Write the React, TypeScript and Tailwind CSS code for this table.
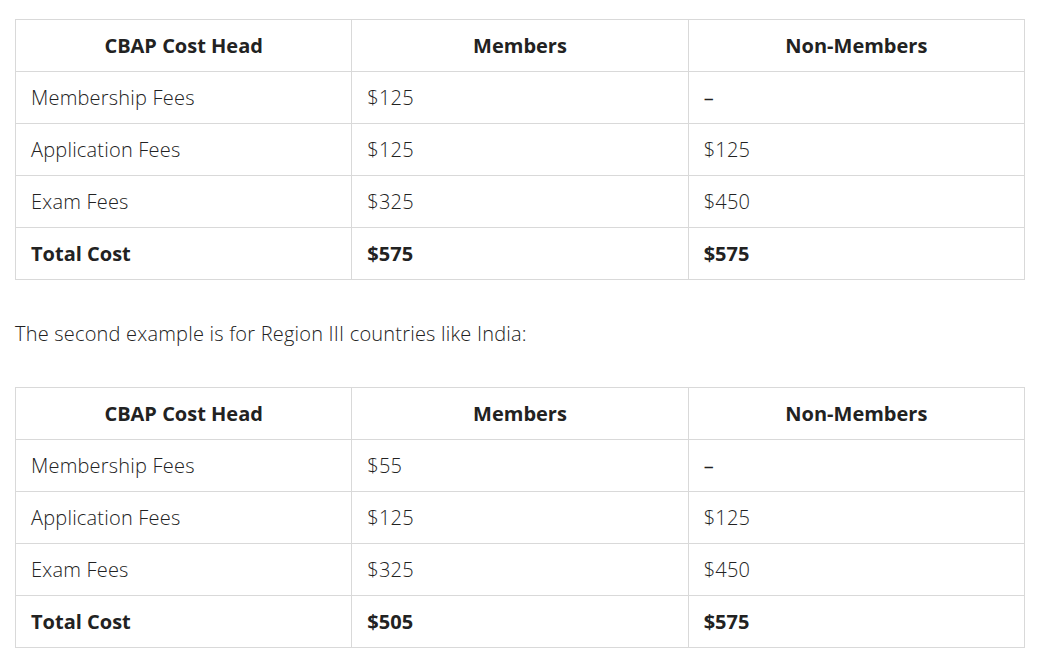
import React from 'react';

type Row = { head: string; members: string; nonMembers: string; total?: boolean };

const regionOne: Row[] = [
  { head: 'Membership Fees', members: '$125', nonMembers: '–' },
  { head: 'Application Fees', members: '$125', nonMembers: '$125' },
  { head: 'Exam Fees', members: '$325', nonMembers: '$450' },
  { head: 'Total Cost', members: '$575', nonMembers: '$575', total: true },
];

const regionThree: Row[] = [
  { head: 'Membership Fees', members: '$55', nonMembers: '–' },
  { head: 'Application Fees', members: '$125', nonMembers: '$125' },
  { head: 'Exam Fees', members: '$325', nonMembers: '$450' },
  { head: 'Total Cost', members: '$505', nonMembers: '$575', total: true },
];

function CostTable({ rows }: { rows: Row[] }) {
  return (
    <table className="w-full table-fixed border-collapse border border-[#d9d9d9]">
      <thead>
        <tr className="h-[52px] tracking-normal">
          <th className="border border-[#d9d9d9] px-[15px] text-center font-bold">CBAP Cost Head</th>
          <th className="border border-[#d9d9d9] px-[15px] text-center font-bold">Members</th>
          <th className="border border-[#d9d9d9] px-[15px] text-center font-bold">Non-Members</th>
        </tr>
      </thead>
      <tbody>
        {rows.map((r) => (
          <tr key={r.head} className={`h-[52px] ${r.total ? 'font-bold tracking-normal' : 'font-light'}`}>
            <td className="border border-[#d9d9d9] px-[15px]">{r.head}</td>
            <td className="border border-[#d9d9d9] px-[15px]">{r.members}</td>
            <td className="border border-[#d9d9d9] px-[15px]">
              {r.nonMembers === '–' ? <span className="font-normal">{r.nonMembers}</span> : r.nonMembers}
            </td>
          </tr>
        ))}
      </tbody>
    </table>
  );
}

export default function App() {
  return (
    <div className="min-h-screen bg-white pl-[15px] pr-[21px] pt-[19px] text-[20px] leading-[30px] text-[#222] font-['Open_Sans',sans-serif] tracking-[0.2px]">
      <CostTable rows={regionOne} />
      <p className="mt-[39px] mb-[38px] font-light">The second example is for Region III countries like India:</p>
      <CostTable rows={regionThree} />
    </div>
  );
}
